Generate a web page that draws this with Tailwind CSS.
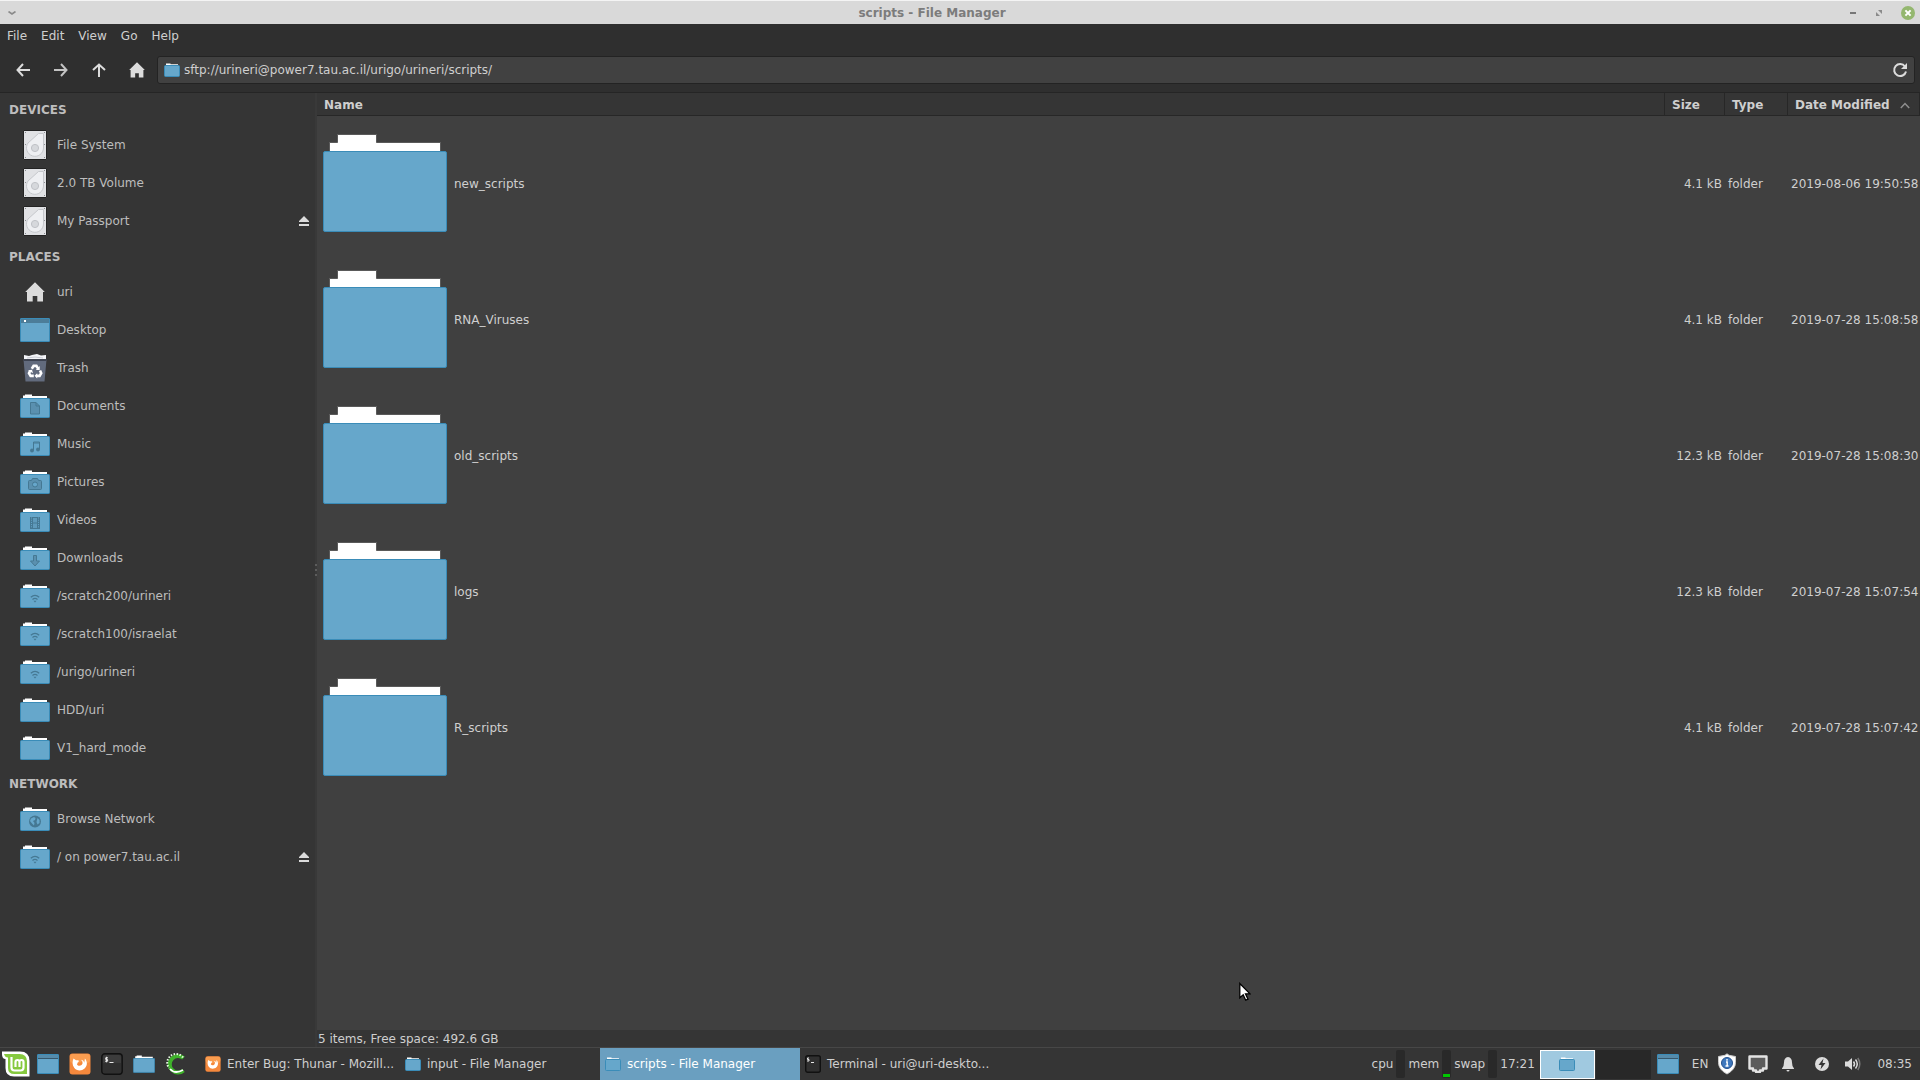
<!DOCTYPE html>
<html lang="en">
<head>
<meta charset="utf-8">
<title>scripts - File Manager</title>
<script src="https://cdn.jsdelivr.net/npm/@tailwindcss/browser@4"></script>
</head>
<body class="flex h-screen flex-col overflow-hidden bg-[#353535] font-['DejaVu_Sans',sans-serif] text-xs leading-4 text-[#cfcfcf]">
<svg class="hidden" aria-hidden="true">
  <symbol id="folder" viewBox="0 0 30 24">
    <path d="M3 5V1.500H5V.5h7v1.500h15V5z" fill="#fff"/>
    <rect x=".5" y="4.500" width="29" height="19" rx=".8" fill="#66a7cb" stroke="#3a8cb8"/>
  </symbol>
  <symbol id="folder-big" viewBox="0 0 124 100">
    <path d="M6.500 18V8.500H14.500V.5H53.500V8.500H117.500V18z" fill="#fff" stroke="#5a5a5a"/>
    <rect x=".5" y="17.500" width="123" height="80" rx="1.500" fill="#66a7cb" stroke="#3a8cb8"/>
  </symbol>
  <symbol id="folder-small" viewBox="0 0 16 14">
    <path d="M2 3V.5h4.500V1.300H14V3z" fill="#fff"/>
    <rect x=".5" y="2.500" width="15" height="11" rx="1" fill="#66a7cb" stroke="#3a8cb8"/>
  </symbol>
  <symbol id="desktop" viewBox="0 0 30 24">
    <rect x=".5" y=".5" width="29" height="23" rx=".5" fill="#66a7cb" stroke="#3a8cb8"/>
    <path d="M1 1h28v4H1z" fill="#4c7d99"/><path d="M4 2h2v2H4z" fill="#fff"/>
  </symbol>
  <symbol id="desktop-panel" viewBox="0 0 22 20">
    <rect x=".5" y=".5" width="21" height="19" rx=".5" fill="#66a7cb" stroke="#3a8cb8"/>
    <path d="M1 1h20v3H1z" fill="#568baa"/><path d="M1 4h20v1H1z" fill="#35586d"/>
  </symbol>
  <symbol id="drive" viewBox="0 0 24 30">
    <rect x=".5" y=".5" width="23" height="29" rx=".5" fill="#e0e1e4" stroke="#232323"/>
    <path d="M15.500 3.500h5V18a8.500 8.500 0 1 1-15.500-5z" fill="#eeeff2" stroke="#c6c8cc"/>
    <circle cx="12" cy="18" r="3.600" fill="#d6d8dc" stroke="#c0c2c7"/>
    <path d="M2 2h1v1H2zM21 2h1v1h-1zM2 14h1v1H2zM21 14h1v1h-1zM2 27h1v1H2zM21 27h1v1h-1z" fill="#8a8c90"/>
  </symbol>
  <symbol id="home" viewBox="0 0 20 20">
    <path d="M10 .3 19.800 10H18v9.500h-5.700V14H7.700v5.500H2V10H.2z" fill="#dcdcdc"/>
  </symbol>
  <symbol id="trash" viewBox="0 0 24 28">
    <path d="M1 5V1l5 1 3-1 5-1 4 1.500L23 1v4z" fill="#f4f5f8"/><path d="M4 4l8-1 8 1" stroke="#c9ccd4" fill="none"/>
    <path d="M.5 5.500h23L21.500 27.500h-19z" fill="#626b7d"/><path d="M.5 5.500h23v1.500H.5z" fill="#3c4250"/>
    <g fill="none" stroke="#fff" stroke-width="2.600"><path d="M8.800 14.800 10.600 11.900h2.800l1.700 2.700M17 16.500l1.200 2.600-1.600 2.800h-3.400M10.800 21.900H7.600L6 19.200l1.300-2.600"/></g>
    <path d="M16.700 12v4h-3.900zM14.200 19.200v5.200l-2.700-2.600zM5 16.300l4-.6 1 3.500z" fill="#fff"/>
  </symbol>
  <symbol id="eject" viewBox="0 0 10 10"><path d="M5 0l5 5v1H0V5zM0 8h10v2H0z" fill="#dcdcdc"/></symbol>
  <symbol id="wifi" viewBox="0 0 30 24"><g fill="none" stroke="#457893" stroke-width="1.200"><path d="M10.800 13.300q4.200-3.800 8.400 0M12.500 15.500q2.500-2.200 5 0"/></g><path d="M13.500 16.800h3L15 18.600z" fill="#457893"/></symbol>
  <symbol id="firefox" viewBox="0 0 22 22">
    <rect x=".5" y=".5" width="21" height="21" rx="3" fill="#f5883c"/><rect x="1" y="1" width="20" height="9" rx="3" fill="#fa9d50"/>
    <path d="M4.500 5.500 7 7.300h2.200c1 .3.900 1.600-.4 2L8 11.500c.8 1.500 3 1.700 4.600.5 1.600-1.500 1.300-4-.7-5.300 2.800.2 3 2 3.400 3l.6-4.200c2.400 2.500 3 7-.3 10-3.200 3-8.200 2.400-10.400-.7C3 12 3.300 8.500 4.500 5.500z" fill="#fff"/>
    <path d="M10 9.500c2 .3 3-.7 2.500-2 1.300 1.700.5 4.300-2.500 3.600z" fill="#f5883c"/>
  </symbol>
  <symbol id="terminal" viewBox="0 0 22 22">
    <rect x=".8" y=".8" width="20.400" height="20.400" rx="3" fill="#303030" stroke="#111" stroke-width="1.400"/><path d="M2 4q0-2 2-2h14q2 0 2 2v6H2z" fill="#3c3c3c"/>
    <path d="M7 4.800H4.700v1.700H6.600v1.700H4M5.500 3.800v5.500M8.500 9.500h4" stroke="#e8e8e8" fill="none"/>
  </symbol>
</svg>

<header class="flex h-6 shrink-0 items-center border-t border-[#f4f4f4] bg-[#d9d9d9] text-[#7c7c7c]">
  <button aria-label="Window menu" class="grid w-6 place-items-center"><svg class="h-1 w-2" viewBox="0 0 8 4"><path d="M.5.5 4 3 7.500.5" stroke="#8a8a8a" stroke-width="1.600" fill="none"/></svg></button>
  <h1 class="flex-1 text-center font-bold">scripts - File Manager</h1>
  <div class="flex w-20 items-center justify-end gap-[18px] pr-[5px]">
    <button aria-label="Minimize"><svg class="h-4 w-2" viewBox="0 0 8 16"><path d="M1 7h6v2H1z" fill="#777"/></svg></button>
    <button aria-label="Restore"><svg class="h-4 w-2" viewBox="0 0 8 16"><path d="M3 5h4v4zM1 7v4h4z" fill="#8a8a8a"/></svg></button>
    <button aria-label="Close"><svg class="size-[14px]" viewBox="0 0 14 14"><circle cx="7" cy="7" r="7" fill="#94b76f"/><path d="M4.400 4.400l5.200 5.200M9.600 4.400 4.400 9.600" stroke="#fff" stroke-width="2"/></svg></button>
  </div>
</header>

<nav aria-label="Menu" class="flex h-[23px] shrink-0 items-center gap-[14px] bg-[#2f2f2f] px-[7px]">
  <button>File</button><button>Edit</button><button>View</button><button>Go</button><button>Help</button>
</nav>

<div class="flex h-[46px] shrink-0 items-center border-b border-[#252525] bg-[#2f2f2f] pr-[5px] pl-1">
  <button aria-label="Back" class="grid w-[38px] place-items-center"><svg class="size-4" viewBox="0 0 16 16"><path d="M15 8H3M8 2 2.500 8 8 14" stroke="#dcdcdc" stroke-width="2" fill="none"/></svg></button>
  <button aria-label="Forward" class="grid w-[38px] place-items-center"><svg class="size-4" viewBox="0 0 16 16"><path d="M1 8h12M8 2l5.500 6L8 14" stroke="#c4c4c4" stroke-width="2" fill="none"/></svg></button>
  <button aria-label="Up" class="grid w-[38px] place-items-center"><svg class="size-4" viewBox="0 0 16 16"><path d="M8 15V3M2 8l6-5.500L14 8" stroke="#dcdcdc" stroke-width="2" fill="none"/></svg></button>
  <button aria-label="Home" class="grid w-[38px] place-items-center"><svg class="size-4"><use href="#home"/></svg></button>
  <div class="ml-px flex h-7 flex-1 items-center gap-1 rounded-[3px] border border-[#232323] bg-[#414141] px-[6px]">
    <svg class="h-[14px] w-4"><use href="#folder-small"/></svg>
    <input aria-label="Location" class="min-w-0 flex-1 bg-transparent outline-none" value="sftp://urineri@power7.tau.ac.il/urigo/urineri/scripts/">
    <button aria-label="Reload"><svg class="size-4" viewBox="0 0 16 16"><path d="M13 4.500A6 6 0 1 0 14 9.500" stroke="#dcdcdc" stroke-width="2" fill="none"/><path d="M15 1v6H9z" fill="#dcdcdc"/></svg></button>
  </div>
</div>

<div class="flex min-h-0 flex-1">
  <aside class="w-[315px] shrink-0 overflow-hidden bg-[#353535] text-[#bdbdbd]">
    <h2 class="flex h-[33px] items-center pl-[9px] font-bold">DEVICES</h2>
    <ul>
      <li class="flex h-[38px] items-center pr-[6px] pl-5"><a href="#" class="flex flex-1 items-center gap-[7px]"><svg class="h-[30px] w-[30px]"><use href="#drive"/></svg>File System</a></li>
      <li class="flex h-[38px] items-center pr-[6px] pl-5"><a href="#" class="flex flex-1 items-center gap-[7px]"><svg class="h-[30px] w-[30px]"><use href="#drive"/></svg>2.0 TB Volume</a></li>
      <li class="flex h-[38px] items-center pr-[6px] pl-5"><a href="#" class="flex flex-1 items-center gap-[7px]"><svg class="h-[30px] w-[30px]"><use href="#drive"/></svg>My Passport</a><button aria-label="Eject My Passport"><svg class="size-[10px]"><use href="#eject"/></svg></button></li>
    </ul>
    <h2 class="flex h-[33px] items-center pl-[9px] font-bold">PLACES</h2>
    <ul>
      <li class="flex h-[38px] items-center pl-5"><a href="#" class="flex items-center gap-[7px]"><svg class="h-5 w-[30px]"><use href="#home"/></svg>uri</a></li>
      <li class="flex h-[38px] items-center pl-5"><a href="#" class="flex items-center gap-[7px]"><svg class="h-6 w-[30px]"><use href="#desktop"/></svg>Desktop</a></li>
      <li class="flex h-[38px] items-center pl-5"><a href="#" class="flex items-center gap-[7px]"><svg class="h-7 w-[30px]"><use href="#trash"/></svg>Trash</a></li>
      <li class="flex h-[38px] items-center pl-5"><a href="#" class="flex items-center gap-[7px]"><svg class="h-6 w-[30px]"><use href="#folder"/><path d="M10.500 8.500h5.500l3.500 3.500v8h-9z" fill="#5a90af" stroke="#457893"/><path d="M16 8.500V12h3.500" fill="none" stroke="#457893"/></svg>Documents</a></li>
      <li class="flex h-[38px] items-center pl-5"><a href="#" class="flex items-center gap-[7px]"><svg class="h-6 w-[30px]"><use href="#folder"/><path d="M13.500 18.500V10h6v7.500M13.500 11h6" fill="none" stroke="#457893"/><circle cx="12" cy="18.500" r="1.900" fill="#457893"/><circle cx="18" cy="17.500" r="1.900" fill="#457893"/></svg>Music</a></li>
      <li class="flex h-[38px] items-center pl-5"><a href="#" class="flex items-center gap-[7px]"><svg class="h-6 w-[30px]"><use href="#folder"/><path d="M8.500 11.500q0-1 1-1h2l1-2h5l1 2h2q1 0 1 1v7q0 1-1 1h-11q-1 0-1-1z" fill="#5a90af" stroke="#457893"/><circle cx="15" cy="14.500" r="2.500" fill="#66a7cb" stroke="#457893"/></svg>Pictures</a></li>
      <li class="flex h-[38px] items-center pl-5"><a href="#" class="flex items-center gap-[7px]"><svg class="h-6 w-[30px]"><use href="#folder"/><path d="M10 9h10v12H10z" fill="#457893"/><path d="M13 10h4v4.500h-4zM13 15.500h4V20h-4z" fill="#5f9abb"/><path d="M11.500 9.500v11M18.500 9.500v11" stroke="#66a7cb" stroke-dasharray="1 1.200"/></svg>Videos</a></li>
      <li class="flex h-[38px] items-center pl-5"><a href="#" class="flex items-center gap-[7px]"><svg class="h-6 w-[30px]"><use href="#folder"/><path d="M13.500 9.500h3v5.500h3L15 20l-4.500-5h3z" fill="#5a90af" stroke="#457893"/></svg>Downloads</a></li>
      <li class="flex h-[38px] items-center pl-5"><a href="#" class="flex items-center gap-[7px]"><svg class="h-6 w-[30px]"><use href="#folder"/><use href="#wifi"/></svg>/scratch200/urineri</a></li>
      <li class="flex h-[38px] items-center pl-5"><a href="#" class="flex items-center gap-[7px]"><svg class="h-6 w-[30px]"><use href="#folder"/><use href="#wifi"/></svg>/scratch100/israelat</a></li>
      <li class="flex h-[38px] items-center pl-5"><a href="#" class="flex items-center gap-[7px]"><svg class="h-6 w-[30px]"><use href="#folder"/><use href="#wifi"/></svg>/urigo/urineri</a></li>
      <li class="flex h-[38px] items-center pl-5"><a href="#" class="flex items-center gap-[7px]"><svg class="h-6 w-[30px]"><use href="#folder"/></svg>HDD/uri</a></li>
      <li class="flex h-[38px] items-center pl-5"><a href="#" class="flex items-center gap-[7px]"><svg class="h-6 w-[30px]"><use href="#folder"/></svg>V1_hard_mode</a></li>
    </ul>
    <h2 class="flex h-[33px] items-center pl-[9px] font-bold">NETWORK</h2>
    <ul>
      <li class="flex h-[38px] items-center pl-5"><a href="#" class="flex items-center gap-[7px]"><svg class="h-6 w-[30px]"><use href="#folder"/><circle cx="15" cy="14.500" r="6" fill="#457893"/><path d="M11 11.500l3-1.500 1.500 1-.5 2-2 1 1.500 2-.5 2.500-2-2-2-2.500zM17.500 11l2 2v3l-2 1.500-1-2.500z" fill="#66a7cb"/></svg>Browse Network</a></li>
      <li class="flex h-[38px] items-center pr-[6px] pl-5"><a href="#" class="flex flex-1 items-center gap-[7px]"><svg class="h-6 w-[30px]"><use href="#folder"/><use href="#wifi"/></svg>/ on power7.tau.ac.il</a><button aria-label="Eject power7.tau.ac.il"><svg class="size-[10px]"><use href="#eject"/></svg></button></li>
    </ul>
  </aside>
  <div class="flex w-[2px] shrink-0 flex-col items-center justify-center gap-[3px] bg-[#393939]" role="separator"><i class="size-[2px] bg-[#5c5c5c]"></i><i class="size-[2px] bg-[#5c5c5c]"></i><i class="size-[2px] bg-[#5c5c5c]"></i></div>

  <main class="flex min-w-0 flex-1 flex-col">
    <div class="min-h-0 flex-1 overflow-hidden bg-[#404040]">
      <table class="w-full table-fixed border-separate border-spacing-0">
        <colgroup><col><col class="w-[60px]"><col class="w-[63px]"><col class="w-[132px]"></colgroup>
        <thead class="text-left">
          <tr class="h-[23px] bg-[#353535]">
            <th class="border-r border-b border-[#272727] pt-[2px] pl-[7px]">Name</th>
            <th class="border-r border-b border-[#272727] pt-[2px] pl-[7px]">Size</th>
            <th class="border-r border-b border-[#272727] pt-[2px] pl-[7px]">Type</th>
            <th class="border-r border-b border-[#272727] pt-[2px] pl-[7px]"><button class="flex w-full items-center justify-between pr-[9px] whitespace-nowrap">Date Modified<svg class="h-[7px] w-[10px]" viewBox="0 0 10 7"><path d="M.8 6 5 1.500 9.200 6" stroke="#8f8f8f" stroke-width="1.500" fill="none"/></svg></button></th>
          </tr>
        </thead>
        <tbody>
          <tr class="h-[136px]"><td><a href="#" class="flex items-center gap-[7px] pl-[6px]"><svg class="h-[100px] w-[124px]"><use href="#folder-big"/></svg>new_scripts</a></td><td class="pr-[3px] text-right whitespace-nowrap">4.1 kB</td><td class="pl-[3px]">folder</td><td class="pl-[3px] whitespace-nowrap">2019-08-06 19:50:58</td></tr>
          <tr class="h-[136px]"><td><a href="#" class="flex items-center gap-[7px] pl-[6px]"><svg class="h-[100px] w-[124px]"><use href="#folder-big"/></svg>RNA_Viruses</a></td><td class="pr-[3px] text-right whitespace-nowrap">4.1 kB</td><td class="pl-[3px]">folder</td><td class="pl-[3px] whitespace-nowrap">2019-07-28 15:08:58</td></tr>
          <tr class="h-[136px]"><td><a href="#" class="flex items-center gap-[7px] pl-[6px]"><svg class="h-[100px] w-[124px]"><use href="#folder-big"/></svg>old_scripts</a></td><td class="pr-[3px] text-right whitespace-nowrap">12.3 kB</td><td class="pl-[3px]">folder</td><td class="pl-[3px] whitespace-nowrap">2019-07-28 15:08:30</td></tr>
          <tr class="h-[136px]"><td><a href="#" class="flex items-center gap-[7px] pl-[6px]"><svg class="h-[100px] w-[124px]"><use href="#folder-big"/></svg>logs</a></td><td class="pr-[3px] text-right whitespace-nowrap">12.3 kB</td><td class="pl-[3px]">folder</td><td class="pl-[3px] whitespace-nowrap">2019-07-28 15:07:54</td></tr>
          <tr class="h-[136px]"><td><a href="#" class="flex items-center gap-[7px] pl-[6px]"><svg class="h-[100px] w-[124px]"><use href="#folder-big"/></svg>R_scripts</a></td><td class="pr-[3px] text-right whitespace-nowrap">4.1 kB</td><td class="pl-[3px]">folder</td><td class="pl-[3px] whitespace-nowrap">2019-07-28 15:07:42</td></tr>
        </tbody>
      </table>
    </div>
    <p class="flex h-[17px] shrink-0 items-center pl-px">5 items, Free space: 492.6 GB</p>
  </main>
</div>

<footer class="flex h-[33px] shrink-0 items-center border-t border-[#474747] bg-[#353535] whitespace-nowrap">
  <div class="flex w-[200px] items-center pl-[2px]">
    <button aria-label="Menu" class="mr-[7px]"><svg class="h-[26px] w-7" viewBox="0 0 28 26"><path d="M0 .5h18Q27.500.5 27.500 10v15.500H12Q3.500 25.500 3.500 17V8Q0 8 0 3z" fill="#fff"/><path d="M2 3h15.500Q25 3 25 10.500V23H12.500Q6 23 6 17V6.500Q3 6.500 2 3z" fill="#86c93e"/><path d="M9.500 6v10.500q0 3 3 3h6q3 0 3-3V11q0-2-2-2t-2 2v5M17.500 11q0-2-2-2t-2 2v5" fill="none" stroke="#fff" stroke-width="2.200"/></svg></button>
    <button aria-label="Show desktop" class="mr-[10px]"><svg class="h-5 w-[22px]"><use href="#desktop-panel"/></svg></button>
    <button aria-label="Firefox" class="mr-[10px]"><svg class="size-[22px]"><use href="#firefox"/></svg></button>
    <button aria-label="Terminal" class="mr-[10px]"><svg class="size-[22px]"><use href="#terminal"/></svg></button>
    <button aria-label="Files" class="mr-[10px]"><svg class="h-[18px] w-[22px]"><use href="#folder"/></svg></button>
    <button aria-label="Anaconda"><svg class="size-[22px]" viewBox="0 0 22 22"><path d="M18.500 5A8.300 8.300 0 1 0 18.500 17.500" fill="none" stroke="#3eb02a" stroke-width="4"/><path d="M18 4.500A8.500 8.500 0 0 0 4 15" fill="none" stroke="#e8f8e4" stroke-width="2" stroke-dasharray="1.500 1.500"/><path d="M5 16q5 5.500 13 1" fill="none" stroke="#fff" stroke-width="1.800"/></svg></button>
  </div>
  <button class="flex h-full w-[200px] items-center gap-[6px] pl-[5px]"><svg class="size-4"><use href="#firefox"/></svg>Enter Bug: Thunar - Mozill...</button>
  <button class="flex h-full w-[200px] items-center gap-[6px] pl-[5px]"><svg class="h-[14px] w-4"><use href="#folder-small"/></svg>input - File Manager</button>
  <button class="flex h-full w-[200px] items-center gap-[6px] bg-[#6a9fc0] pl-[5px] text-white"><svg class="h-[14px] w-4"><use href="#folder-small"/></svg>scripts - File Manager</button>
  <button class="flex h-full w-[200px] items-center gap-[6px] pl-[5px]"><svg class="h-[18px] w-4" viewBox="0 0 16 18"><rect x=".7" y=".7" width="14.600" height="16.600" rx="2" fill="#303030" stroke="#111" stroke-width="1.400"/><path d="M4 3H2.500v1.500H4V6H2M6 7.500h3" stroke="#e8e8e8" fill="none"/></svg>Terminal - uri@uri-deskto...</button>

  <div class="ml-auto flex h-full items-center">
    <span>cpu</span><span class="mr-[3px] ml-[3px] h-7 w-[9px] rounded-[2px] bg-[#292929]"></span>
    <span>mem</span><span class="mr-[3px] ml-[3px] flex h-7 w-[9px] items-end rounded-[2px] bg-[#292929] px-px pb-px"><span class="h-[3px] w-full bg-[#00c800]"></span></span>
    <span>swap</span><span class="mr-[3px] ml-[3px] h-7 w-[9px] rounded-[2px] bg-[#292929]"></span>
    <span>17:21</span>
    <button aria-label="Workspace 1" class="ml-[5px] grid h-[29px] w-[55px] place-items-center border border-white bg-[#a0c9e0]"><svg class="h-[14px] w-4"><use href="#folder-small"/></svg></button>
    <button aria-label="Workspace 2" class="ml-px h-[29px] w-[55px] bg-[#282828]"></button>
    <button aria-label="Show desktop" class="ml-[6px]"><svg class="h-5 w-[22px]"><use href="#desktop-panel"/></svg></button>
    <button class="ml-[13px]">EN</button>
    <button aria-label="Update manager" class="ml-[9px]"><svg class="h-[22px] w-5" viewBox="0 0 20 22"><path d="M10 .8 12 2.300l6.500 1.200v6q0 7-8.500 11.500Q1.500 16.500 1.500 9.500v-6L8 2.300z" fill="#fff" stroke="#ccc"/><circle cx="10" cy="10" r="5.500" fill="#3f78bd" stroke="#24508c"/><path d="M10 6v1.800M9 9h1.200v4M8.500 13h3" stroke="#fff" stroke-width="1.400" fill="none"/></svg></button>
    <button aria-label="Network" class="ml-[11px]"><svg class="h-[18px] w-5" viewBox="0 0 20 18"><path d="M1.500 1.500h17v12h-3.500v2H12v1.500H8v-1.500H5v-2H1.500z" fill="#5c5c5c" stroke="#e3e3e3" stroke-width="2.400" stroke-linejoin="round"/></svg></button>
    <button aria-label="Notifications" class="ml-[14px]"><svg class="h-4 w-3" viewBox="0 0 12 16"><path d="M6 1q4 .5 4 5.500 0 4 2 6v.5H0v-.5q2-2 2-6Q2 1.500 6 1zM4.500 14h3q0 1.500-1.500 1.500T4.500 14z" fill="#dcdcdc"/></svg></button>
    <button aria-label="Power" class="ml-[21px]"><svg class="size-[14px]" viewBox="0 0 14 14"><circle cx="7" cy="7" r="7" fill="#dcdcdc"/><path d="M8.500 1.500 3.500 8h3L5.500 12.500 10.500 6h-3z" fill="#353535"/></svg></button>
    <button aria-label="Volume" class="ml-4"><svg class="h-[14px] w-4" viewBox="0 0 16 14"><path d="M0 4.500h3L7 1v12L3 9.500H0z" fill="#dcdcdc"/><path d="M8.500 4.500q2 2.500 0 5M10.500 2.500q3.500 4.500 0 9" stroke="#dcdcdc" stroke-width="1.500" fill="none"/><path d="M12.800 1q4 6 0 12" stroke="#777" stroke-width="1.500" fill="none"/></svg></button>
    <time class="mr-2 ml-4">08:35</time>
  </div>
</footer>

<svg class="pointer-events-none absolute top-[982px] left-[1239px] h-5 w-3" viewBox="0 0 12 20" aria-hidden="true"><path d="M.8 1.500v14.200l3.400-3 2.500 5.500 2.300-1-2.500-5.400h4.500z" fill="#fff" stroke="#000" stroke-width="1.300"/></svg>
</body>
</html>
